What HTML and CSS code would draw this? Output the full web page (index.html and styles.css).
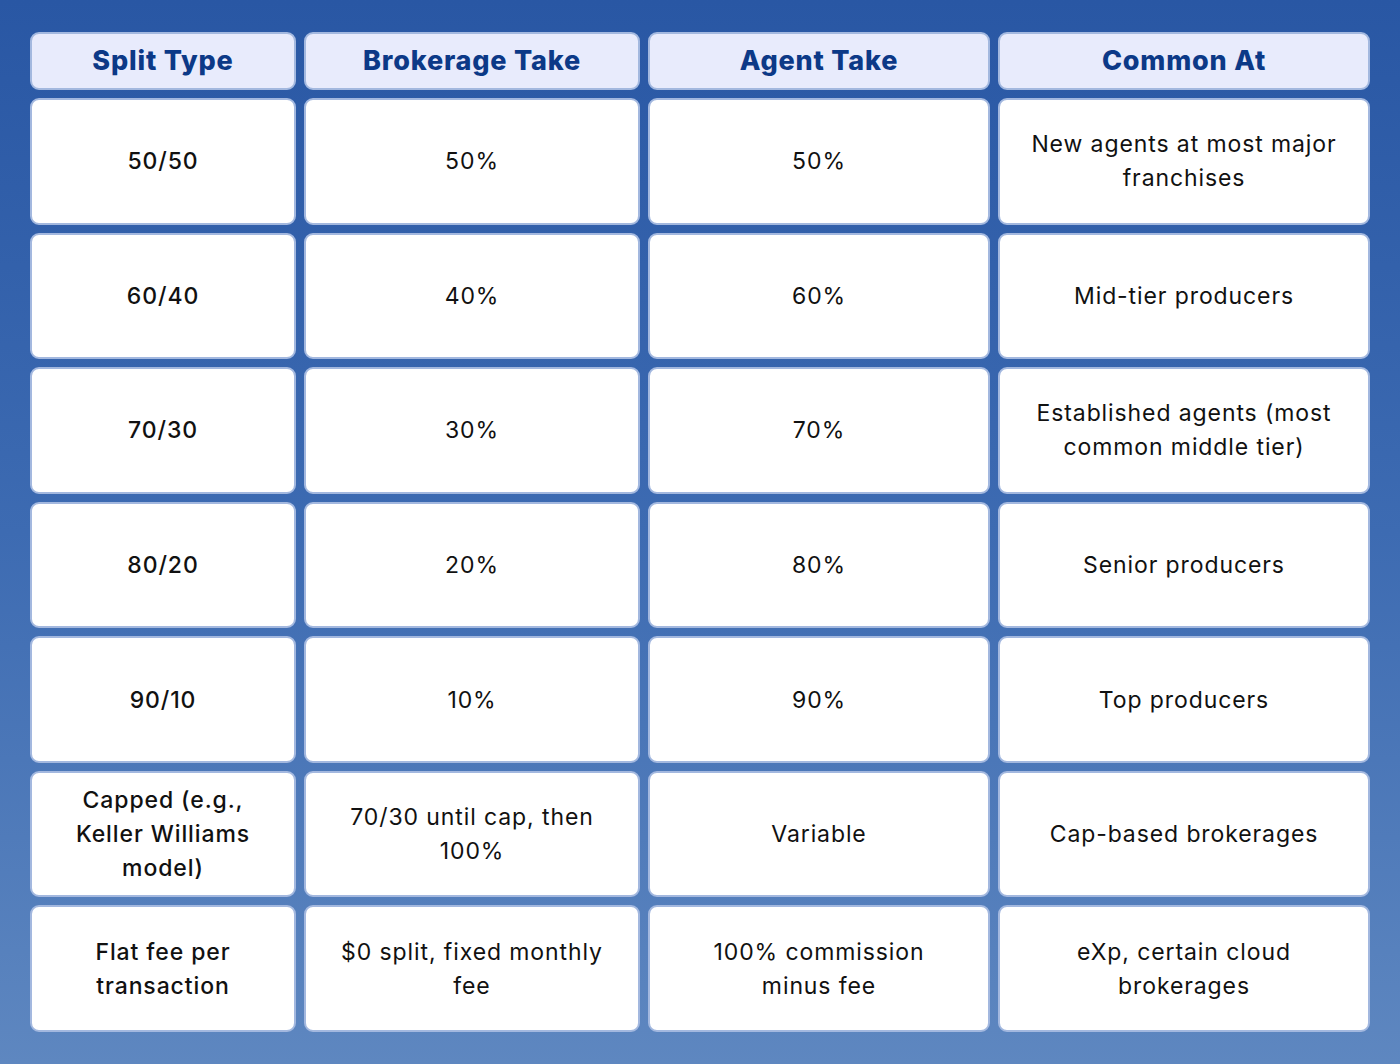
FILE: index.html
```html
<!DOCTYPE html>
<html lang="en">
<head>
<meta charset="utf-8">
<title>Commission Splits</title>
<link rel="stylesheet" href="styles.css">
</head>
<body>
<div class="table">
  <div class="cell head">Split Type</div>
  <div class="cell head">Brokerage Take</div>
  <div class="cell head">Agent Take</div>
  <div class="cell head">Common At</div>

  <div class="cell c1">50/50</div>
  <div class="cell c2">50%</div>
  <div class="cell c3">50%</div>
  <div class="cell c4">New agents at most major franchises</div>

  <div class="cell c1">60/40</div>
  <div class="cell c2">40%</div>
  <div class="cell c3">60%</div>
  <div class="cell c4">Mid-tier producers</div>

  <div class="cell c1">70/30</div>
  <div class="cell c2">30%</div>
  <div class="cell c3">70%</div>
  <div class="cell c4">Established agents (most common middle tier)</div>

  <div class="cell c1">80/20</div>
  <div class="cell c2">20%</div>
  <div class="cell c3">80%</div>
  <div class="cell c4">Senior producers</div>

  <div class="cell c1">90/10</div>
  <div class="cell c2">10%</div>
  <div class="cell c3">90%</div>
  <div class="cell c4">Top producers</div>

  <div class="cell c1">Capped (e.g., Keller Williams model)</div>
  <div class="cell c2">70/30 until cap, then 100%</div>
  <div class="cell c3">Variable</div>
  <div class="cell c4">Cap-based brokerages</div>

  <div class="cell c1">Flat fee per transaction</div>
  <div class="cell c2">$0 split, fixed monthly fee</div>
  <div class="cell c3">100% commission minus fee</div>
  <div class="cell c4">eXp, certain cloud brokerages</div>
</div>
</body>
</html>
```

FILE: styles.css
```css
* { box-sizing: border-box; }
html, body { margin: 0; }
body {
  width: 1400px;
  height: 1064px;
  padding: 32px 30px 32px;
  background: linear-gradient(180deg, #2957a4 0%, #3d6bb2 50%, #5e87c0 100%);
  font-family: "Inter", "Open Sans", sans-serif;
  color: #111111;
}
.table {
  height: 100%;
  display: grid;
  grid-template-columns: 266px 336px 342px 372px;
  grid-template-rows: 58px repeat(7, 1fr);
  gap: 8px;
}
.cell {
  background: #ffffff;
  border: 2px solid #a3b8df;
  border-radius: 9px;
  display: flex;
  align-items: center;
  justify-content: center;
  text-align: center;
  padding: 8px 28px;
  font-size: 23px;
  line-height: 34px;
  letter-spacing: 0.9px;
  font-weight: 400;
}
.cell.head {
  background: #e8ebfc;
  color: #0c3987;
  font-weight: 800;
  font-size: 27px;
  letter-spacing: 0.8px;
  padding: 0 10px 0;
}
.cell.c1 {
  font-weight: 500;
  padding: 8px 36px;
}
.cell.c2 { padding: 8px 26px; }
.cell.c3 { padding: 8px 36px; }
.cell.c4 { padding: 8px 22px; }
```
